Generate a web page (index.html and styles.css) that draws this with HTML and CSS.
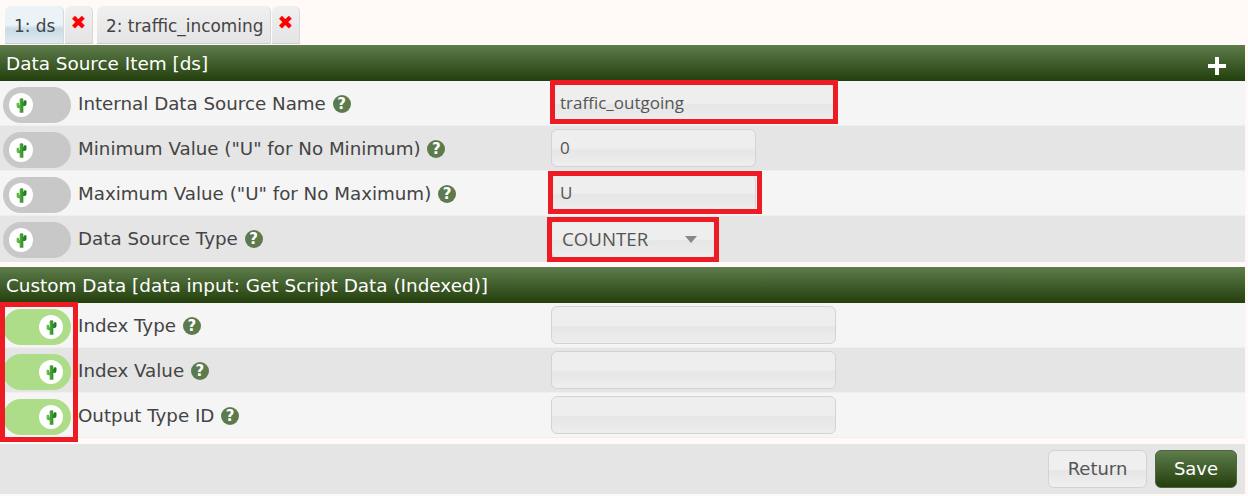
FILE: index.html
```html
<!DOCTYPE html>
<html lang="en">
<head>
<meta charset="utf-8">
<title>Data Source Item</title>
<link rel="stylesheet" href="styles.css">
</head>
<body>
<svg class="defs" width="0" height="0" aria-hidden="true">
  <defs>
    <linearGradient id="cg" x1="0" x2="1" y1="0" y2="0"><stop offset="0" stop-color="#6cc850"/><stop offset="1" stop-color="#167016"/></linearGradient>
    <symbol id="cactus" viewBox="0 0 12 18">
      <path fill="url(#cg)" d="M4 2.4C4 .6 8 .6 8 2.4V5H8.6V4.2C8.6 3 11.4 3 11.4 4.2V7.4C11.4 8.6 10.4 9.6 9.2 9.6H8V17H4V12H2.8C1.6 12 .6 11 .6 9.8V6.8C.6 5.6 3.4 5.6 3.4 6.8V8.6H4Z"/>
    </symbol>
  </defs>
</svg>
<div class="tabs">
  <span class="tab tab-active">1: ds</span><span class="close">✖</span>
  <span class="tab tab-second">2: traffic_incoming</span><span class="close">✖</span>
</div>

<section class="panel">
  <h2 class="head head-with-add">Data Source Item [ds]<span class="add"></span></h2>
  <div class="row row-light">
    <span class="toggle"><span class="knob"><svg class="cactus"><use href="#cactus"/></svg></span></span>
    <span class="label">Internal Data Source Name <span class="help">?</span></span>
    <span class="field"><span class="input wide">traffic_outgoing</span><span class="mark mark-a"></span></span>
  </div>
  <div class="row row-dark">
    <span class="toggle"><span class="knob"><svg class="cactus"><use href="#cactus"/></svg></span></span>
    <span class="label">Minimum Value ("U" for No Minimum) <span class="help">?</span></span>
    <span class="field"><span class="input narrow">0</span></span>
  </div>
  <div class="row row-light">
    <span class="toggle"><span class="knob"><svg class="cactus"><use href="#cactus"/></svg></span></span>
    <span class="label">Maximum Value ("U" for No Maximum) <span class="help">?</span></span>
    <span class="field"><span class="input narrow">U</span><span class="mark mark-b"></span></span>
  </div>
  <div class="row row-dark row-last">
    <span class="toggle"><span class="knob"><svg class="cactus"><use href="#cactus"/></svg></span></span>
    <span class="label label-up">Data Source Type <span class="help">?</span></span>
    <span class="field"><span class="input select">COUNTER<span class="caret"></span></span><span class="mark mark-c"></span></span>
  </div>
</section>

<section class="panel panel-second">
  <h2 class="head">Custom Data [data input: Get Script Data (Indexed)]</h2>
  <div class="group">
    <div class="row row-light">
      <span class="toggle on"><span class="knob"><svg class="cactus"><use href="#cactus"/></svg></span></span>
      <span class="label">Index Type <span class="help">?</span></span>
      <span class="field"><span class="input wide"></span></span>
    </div>
    <div class="row row-dark">
      <span class="toggle on"><span class="knob"><svg class="cactus"><use href="#cactus"/></svg></span></span>
      <span class="label">Index Value <span class="help">?</span></span>
      <span class="field"><span class="input wide"></span></span>
    </div>
    <div class="row row-light">
      <span class="toggle on"><span class="knob"><svg class="cactus"><use href="#cactus"/></svg></span></span>
      <span class="label">Output Type ID <span class="help">?</span></span>
      <span class="field"><span class="input wide"></span></span>
    </div>
    <span class="mark mark-d"></span>
  </div>
</section>

<footer class="actions">
  <span class="btn">Return</span>
  <span class="btn btn-save">Save</span>
</footer>
</body>
</html>
```

FILE: styles.css
```css
* { box-sizing: border-box; }
html, body { margin: 0; padding: 0; }
body {
  width: 1248px;
  height: 496px;
  overflow: hidden;
  background: #fff9f8;
  font-family: "DejaVu Sans", sans-serif;
  font-size: 18.25px;
  color: #444;
  padding-right: 3px;
}
.defs { position: absolute; }
.tabs {
  height: 45px;
  padding: 6px 0 0 5px;
  display: flex;
  align-items: stretch;
}
.tab, .close {
  display: block;
  height: 38px;
  background: linear-gradient(#f0f0f0, #e4e4e4);
  border-radius: 6px 6px 0 0;
  border-bottom: 1px solid #ccc;
  border-right: 1px solid #d8d8d8;
}
.tab {
  font-size: 16.9px;
  line-height: 40px;
  padding: 0 0 0 9px;
}
.tab-active {
  width: 59px;
  background: linear-gradient(#ecf3f7 0, #ecf3f7 50%, #c8dbe6 62%, #dfeaf0 100%);
}
.tab-second { width: 174px; margin-left: 4px; white-space: nowrap; }
.close {
  width: 28px;
  margin-left: 1px;
  color: #f00;
  font-size: 19px;
  line-height: 32px;
  text-align: center;
}
.head {
  height: 36px;
  margin: 0;
  padding-left: 6px;
  background: linear-gradient(#5e7c4c, #233f0c);
  color: #fff;
  font-size: 18.4px;
  font-weight: 400;
  line-height: 37px;
  display: flex;
  justify-content: space-between;
}
.add {
  position: relative;
  width: 18px;
  height: 18px;
  margin: 12px 19px 0 0;
  background:
    linear-gradient(#fff, #fff) center / 18px 4px no-repeat,
    linear-gradient(#fff, #fff) center / 4px 18px no-repeat;
}
.row {
  height: 45px;
  display: flex;
  align-items: center;
  padding-left: 3px;
  border-bottom: 1px solid #efefef;
}
.row-light { background: #f5f5f5; }
.row-dark { background: #e5e5e5; }
.row-last { height: 46px; border-bottom: 0; }
.toggle {
  flex: none;
  align-self: flex-start;
  margin-top: 6px;
  width: 68px;
  height: 36px;
  border-radius: 18px;
  background: #c8c8c8;
  padding: 6px;
  display: flex;
  justify-content: flex-start;
}
.toggle.on { background: #aedd8a; justify-content: flex-end; padding-right: 8px; }
.knob {
  width: 24px;
  height: 24px;
  border-radius: 50%;
  background: #fff;
  display: flex;
  align-items: center;
  justify-content: center;
}
.cactus { width: 11px; height: 17px; }
.label {
  flex: none;
  width: 480px;
  padding-left: 7px;
  white-space: nowrap;
  color: #444;
}
.label-up { padding-bottom: 2px; }
.help {
  display: inline-block;
  width: 18px;
  height: 18px;
  margin-left: 1px;
  border-radius: 50%;
  background: #5d7a4d;
  color: #fff;
  font-size: 15px;
  font-weight: 700;
  line-height: 18px;
  text-align: center;
  vertical-align: 1px;
}
.field { position: relative; display: block; }
.input {
  display: block;
  height: 38px;
  border: 1px solid #d3d3d3;
  border-radius: 6px;
  background: linear-gradient(#eeeeee 0, #eeeeee 50%, #e6e6e6 56%, #eeeeee 100%);
  font-family: "Open Sans", sans-serif;
  font-size: 17px;
  line-height: 36px;
  padding-left: 8px;
  color: #555;
}
.wide { width: 285px; }
.narrow { width: 205px; }
.select { width: 165px; padding-left: 10px; position: relative; font-size: 18.7px; }
.caret {
  position: absolute;
  right: 18px;
  top: 15px;
  border: 6px solid transparent;
  border-top: 7px solid #888;
  border-bottom: 0;
}
.mark {
  position: absolute;
  border: 5px solid #ed1c24;
  pointer-events: none;
}
.mark-a { left: -1px; top: -4px; width: 288px; height: 44px; }
.mark-b { left: -3px; top: -3px; width: 214px; height: 43px; }
.mark-c { left: -4px; top: -3px; width: 172px; height: 45px; }
.panel-second { margin-top: 5px; }
.group { position: relative; }
.mark-d { left: 0; top: -1px; width: 78px; height: 140px; }
.actions {
  margin-top: 6px;
  height: 50px;
  background: #e5e5e5;
  display: flex;
  justify-content: flex-end;
  align-items: center;
  gap: 8px;
  padding: 0 8px 0 0;
  font-size: 18px;
}
.btn {
  display: block;
  width: 99px;
  height: 38px;
  border: 1px solid #d3d3d3;
  border-radius: 6px;
  background: linear-gradient(#efefef 0, #efefef 50%, #e6e6e6 56%, #efefef 100%);
  line-height: 36px;
  text-align: center;
  color: #555;
}
.btn-save {
  width: 82px;
  border-color: #4c6640;
  background: linear-gradient(#5e7c4c, #233f0c);
  color: #fff;
}
```
